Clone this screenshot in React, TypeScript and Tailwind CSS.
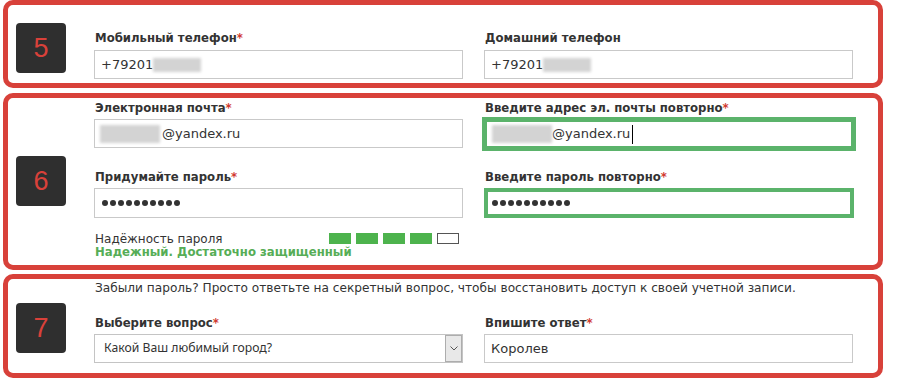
import React from "react";

function Badge({ n, className }: { n: string; className: string }) {
  return (
    <div
      className={
        "ml-[8px] w-[50px] h-[50px] rounded-[4px] bg-[#2f2f2f] flex items-center justify-center text-[#d9413a] text-[27px] leading-none font-['Liberation_Sans',sans-serif] shrink-0 " +
        className
      }
    >
      {n}
    </div>
  );
}

function Label({ text, req }: { text: string; req?: boolean }) {
  return (
    <div className="h-[16px] leading-[16px] pl-[1px] text-[11.7px] font-bold text-[#333] whitespace-nowrap">
      {text}
      {req && <span className="text-[#d13a30]">*</span>}
    </div>
  );
}

function Blur({ className }: { className: string }) {
  return <span className={"inline-block bg-[#d3d3d3] blur-[1.5px] " + className} />;
}

function Dots() {
  return (
    <div className="flex gap-[2px]">
      {Array.from({ length: 10 }).map((_, i) => (
        <span key={i} className="w-[6px] h-[6px] rounded-full bg-[#333]" />
      ))}
    </div>
  );
}

export default function App() {
  return (
    <div className="w-[902px] h-[379px] bg-white overflow-hidden font-['DejaVu_Sans',sans-serif] text-[#333]">
      <div className="ml-[3px] w-[880px] flex flex-col">
        {/* Box 5 */}
        <div className="h-[88px] border-[5px] border-[#d8413a] rounded-[10px] flex items-start">
          <Badge n="5" className="mt-[18px]" />
          <div className="ml-[28px] pt-[25px] grid grid-cols-[369px_369px] gap-x-[21px]">
            <div className="flex flex-col">
              <Label text="Мобильный телефон" req />
              <div className="mt-[4px] h-[29px] border border-[#c9c9c9] flex items-center pl-[6px] text-[13px]">
                <span>+79201</span>
                <Blur className="w-[48px] h-[14px]" />
              </div>
            </div>
            <div className="flex flex-col">
              <Label text="Домашний телефон" />
              <div className="mt-[4px] h-[29px] border border-[#c9c9c9] flex items-center pl-[6px] text-[13px]">
                <span>+79201</span>
                <Blur className="w-[48px] h-[14px]" />
              </div>
            </div>
          </div>
        </div>

        {/* Box 6 */}
        <div className="mt-[5px] h-[177px] border-[5px] border-[#d8413a] rounded-[10px] flex items-start">
          <Badge n="6" className="mt-[58px]" />
          <div className="ml-[28px] pt-[2px] grid grid-cols-[369px_369px] gap-x-[21px]">
            <div className="flex flex-col">
              <Label text="Электронная почта" req />
              <div className="mt-[3px] h-[29px] border border-[#c9c9c9] flex items-center pl-[5px] text-[13px]">
                <Blur className="w-[60px] h-[18px]" />
                <span className="ml-[2px]">@yandex.ru</span>
              </div>
              <div className="mt-[21px]">
                <Label text="Придумайте пароль" req />
              </div>
              <div className="mt-[3px] h-[30px] border border-[#c9c9c9] flex items-center pl-[7px]">
                <Dots />
              </div>
              <div className="mt-[14px] h-[14px] flex items-start">
                <span className="w-[235px] pt-[1px] pl-[1px] text-[12px] leading-[13px] whitespace-nowrap">
                  Надёжность пароля
                </span>
                <div className="mt-[1px] flex gap-[5px]">
                  <span className="w-[22px] h-[11px] bg-[#4db34d]" />
                  <span className="w-[22px] h-[11px] bg-[#4db34d]" />
                  <span className="w-[22px] h-[11px] bg-[#4db34d]" />
                  <span className="w-[22px] h-[11px] bg-[#4db34d]" />
                  <span className="w-[22px] h-[11px] bg-white border border-[#555]" />
                </div>
              </div>
              <div className="h-[13px] leading-[13px] pl-[1px] text-[11.7px] font-bold text-[#56ad56] whitespace-nowrap">
                Надежный. Достаточно защищенный
              </div>
            </div>
            <div className="flex flex-col">
              <Label text="Введите адрес эл. почты повторно" req />
              <div className="mt-[1px] -ml-[2px] -mr-[3px] h-[34px] border-[5px] border-[#5bb36b] flex items-center pl-[5px] text-[13px]">
                <Blur className="w-[60px] h-[18px]" />
                <span>@yandex.ru</span>
                <span className="ml-[2px] w-[1px] h-[19px] bg-black" />
              </div>
              <div className="mt-[18px]">
                <Label text="Введите пароль повторно" req />
              </div>
              <div className="mt-[3px] -mr-[1px] h-[30px] border-[4px] border-[#5bb36b] flex items-center pl-[4px]">
                <Dots />
              </div>
            </div>
          </div>
        </div>

        {/* Box 7 */}
        <div className="mt-[4px] h-[104px] border-[5px] border-[#d8413a] rounded-[10px] flex items-start">
          <Badge n="7" className="mt-[24px]" />
          <div className="ml-[28px] pt-[1px] grid grid-cols-[369px_369px] gap-x-[21px]">
            <div className="col-span-2 h-[16px] leading-[16px] pl-[1px] text-[12.15px] whitespace-nowrap">
              Забыли пароль? Просто ответьте на секретный вопрос, чтобы восстановить доступ к своей учетной записи.
            </div>
            <div className="mt-[19px] flex flex-col">
              <Label text="Выберите вопрос" req />
              <div className="mt-[3px] h-[29px] border border-[#c4c4c4] flex items-center">
                <span className="flex-1 pl-[9px] text-[12.2px] font-['Noto_Sans',sans-serif] whitespace-nowrap">
                  Какой Ваш любимый город?
                </span>
                <div className="w-[17px] h-[27px] bg-[#e8e8e8] border border-[#adadad] flex items-center justify-center">
                  <svg width="8" height="5" viewBox="0 0 8 5">
                    <path d="M0.5 0.5 L4 4 L7.5 0.5" fill="none" stroke="#555" strokeWidth="1" />
                  </svg>
                </div>
              </div>
            </div>
            <div className="mt-[19px] flex flex-col">
              <Label text="Впишите ответ" req />
              <div className="mt-[3px] h-[29px] border border-[#c9c9c9] flex items-center pl-[6px] text-[13px]">
                Королев
              </div>
            </div>
          </div>
        </div>
      </div>
    </div>
  );
}
